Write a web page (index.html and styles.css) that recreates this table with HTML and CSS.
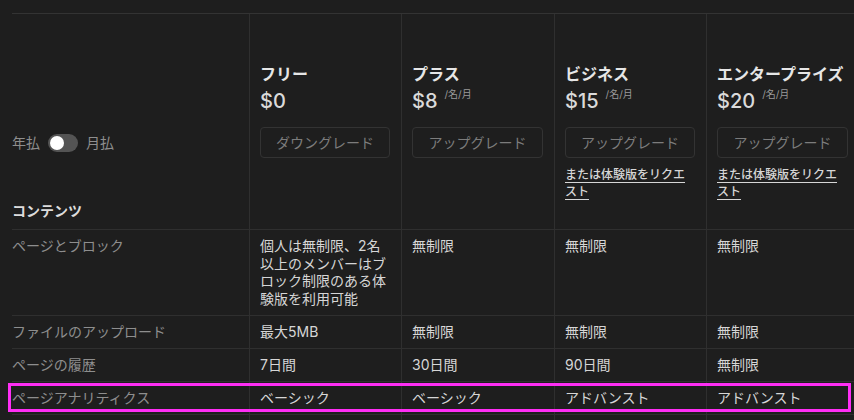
FILE: index.html
```html
<!DOCTYPE html>
<html lang="ja">
<head>
<meta charset="utf-8">
<title>料金プラン</title>
<link rel="stylesheet" href="styles.css">
</head>
<body>
<div class="table">
  <div class="row head">
    <div class="cell label-head">
      <div class="billing">
        <span>年払</span>
        <span class="toggle"></span>
        <span>月払</span>
      </div>
      <div class="section">コンテンツ</div>
    </div>
    <div class="cell plan">
      <div class="plan-name">フリー</div>
      <div class="price">$0</div>
      <div class="btn">ダウングレード</div>
    </div>
    <div class="cell plan">
      <div class="plan-name">プラス</div>
      <div class="price">$8<span class="per">/名/月</span></div>
      <div class="btn">アップグレード</div>
    </div>
    <div class="cell plan">
      <div class="plan-name">ビジネス</div>
      <div class="price">$15<span class="per">/名/月</span></div>
      <div class="btn">アップグレード</div>
      <a class="trial" href="#">または体験版をリクエスト</a>
    </div>
    <div class="cell plan">
      <div class="plan-name">エンタープライズ</div>
      <div class="price">$20<span class="per">/名/月</span></div>
      <div class="btn">アップグレード</div>
      <a class="trial" href="#">または体験版をリクエスト</a>
    </div>
  </div>

  <div class="row">
    <div class="cell label">ページとブロック</div>
    <div class="cell val">個人は無制限、2名以上のメンバーはブロック制限のある体験版を利用可能</div>
    <div class="cell val">無制限</div>
    <div class="cell val">無制限</div>
    <div class="cell val">無制限</div>
  </div>
  <div class="row">
    <div class="cell label">ファイルのアップロード</div>
    <div class="cell val">最大5MB</div>
    <div class="cell val">無制限</div>
    <div class="cell val">無制限</div>
    <div class="cell val">無制限</div>
  </div>
  <div class="row">
    <div class="cell label">ページの履歴</div>
    <div class="cell val">7日間</div>
    <div class="cell val">30日間</div>
    <div class="cell val">90日間</div>
    <div class="cell val">無制限</div>
  </div>
  <div class="row highlight">
    <div class="cell label">ページアナリティクス</div>
    <div class="cell val">ベーシック</div>
    <div class="cell val">ベーシック</div>
    <div class="cell val">アドバンスト</div>
    <div class="cell val">アドバンスト</div>
  </div>
  <div class="row">
    <div class="cell label empty"></div>
    <div class="cell val empty"></div>
    <div class="cell val empty"></div>
    <div class="cell val empty"></div>
    <div class="cell val empty"></div>
  </div>
</div>
</body>
</html>
```

FILE: styles.css
```css
html {
  overflow: hidden;
  background: #1e1e1e;
}

body {
  margin: 0;
  padding: 13px 0 0 12px;
  background: #1e1e1e;
  font-family: "Inter", "Noto Sans CJK JP", sans-serif;
  font-size: 14px;
  color: #d4d4d4;
}

.table {
  width: 849px;
  border-top: 1px solid #333333;
}

.row {
  display: grid;
  grid-template-columns: 237px 152px 153px 152px 153px;
  position: relative;
}

.cell {
  box-sizing: border-box;
  border-bottom: 1px solid #2f2f2f;
  line-height: 17.67px;
  padding: 7px 11px 7.33px 10px;
}

.cell + .cell {
  border-left: 1px solid #2f2f2f;
}

.empty {
  height: 33px;
}

.label {
  padding-left: 0;
  color: #8e8e8e;
}

.val {
  color: #d6d6d6;
}

/* header */
.head .cell {
  height: 216px;
}

.label-head {
  display: flex;
  flex-direction: column;
  justify-content: flex-end;
  padding: 0 0 9px 0;
}

.billing {
  display: flex;
  align-items: center;
  gap: 8px;
  height: 18px;
  color: #8e8e8e;
  line-height: 18px;
  margin-bottom: 50px;
}

.toggle {
  position: relative;
  width: 30px;
  height: 18px;
  border-radius: 9px;
  background: #545454;
}

.toggle::after {
  content: "";
  position: absolute;
  left: 2px;
  top: 2px;
  width: 14px;
  height: 14px;
  border-radius: 50%;
  background: #ffffff;
}

.section {
  font-weight: 700;
  line-height: 18px;
  color: #dcdcdc;
}

.plan {
  padding-top: 49px;
}

.plan-name {
  font-size: 16px;
  font-weight: 700;
  line-height: 22px;
  color: #e6e6e6;
}

.price {
  margin-top: 2px;
  font-size: 20px;
  font-weight: 500;
  line-height: 28px;
  color: #dadada;
}

.per {
  display: inline-block;
  vertical-align: top;
  margin-left: 7px;
  font-size: 10px;
  font-weight: 400;
  line-height: 14px;
  color: #9a9a9a;
}

.btn {
  margin-top: 12px;
  box-sizing: border-box;
  height: 31px;
  border: 1px solid #333333;
  border-radius: 4px;
  display: flex;
  align-items: center;
  justify-content: center;
  color: #7c7c7c;
  font-size: 14px;
}

.trial {
  display: block;
  margin-top: 8px;
  font-size: 12px;
  font-weight: 500;
  line-height: 17px;
  color: #d6d6d6;
  text-decoration: underline;
  text-underline-offset: 3px;
}

/* highlighted row overlay */
.highlight::after {
  content: "";
  position: absolute;
  left: -4px;
  top: 1px;
  width: 843px;
  height: 29px;
  box-sizing: border-box;
  border: 3px solid #ff2ef5;
  pointer-events: none;
}
```
